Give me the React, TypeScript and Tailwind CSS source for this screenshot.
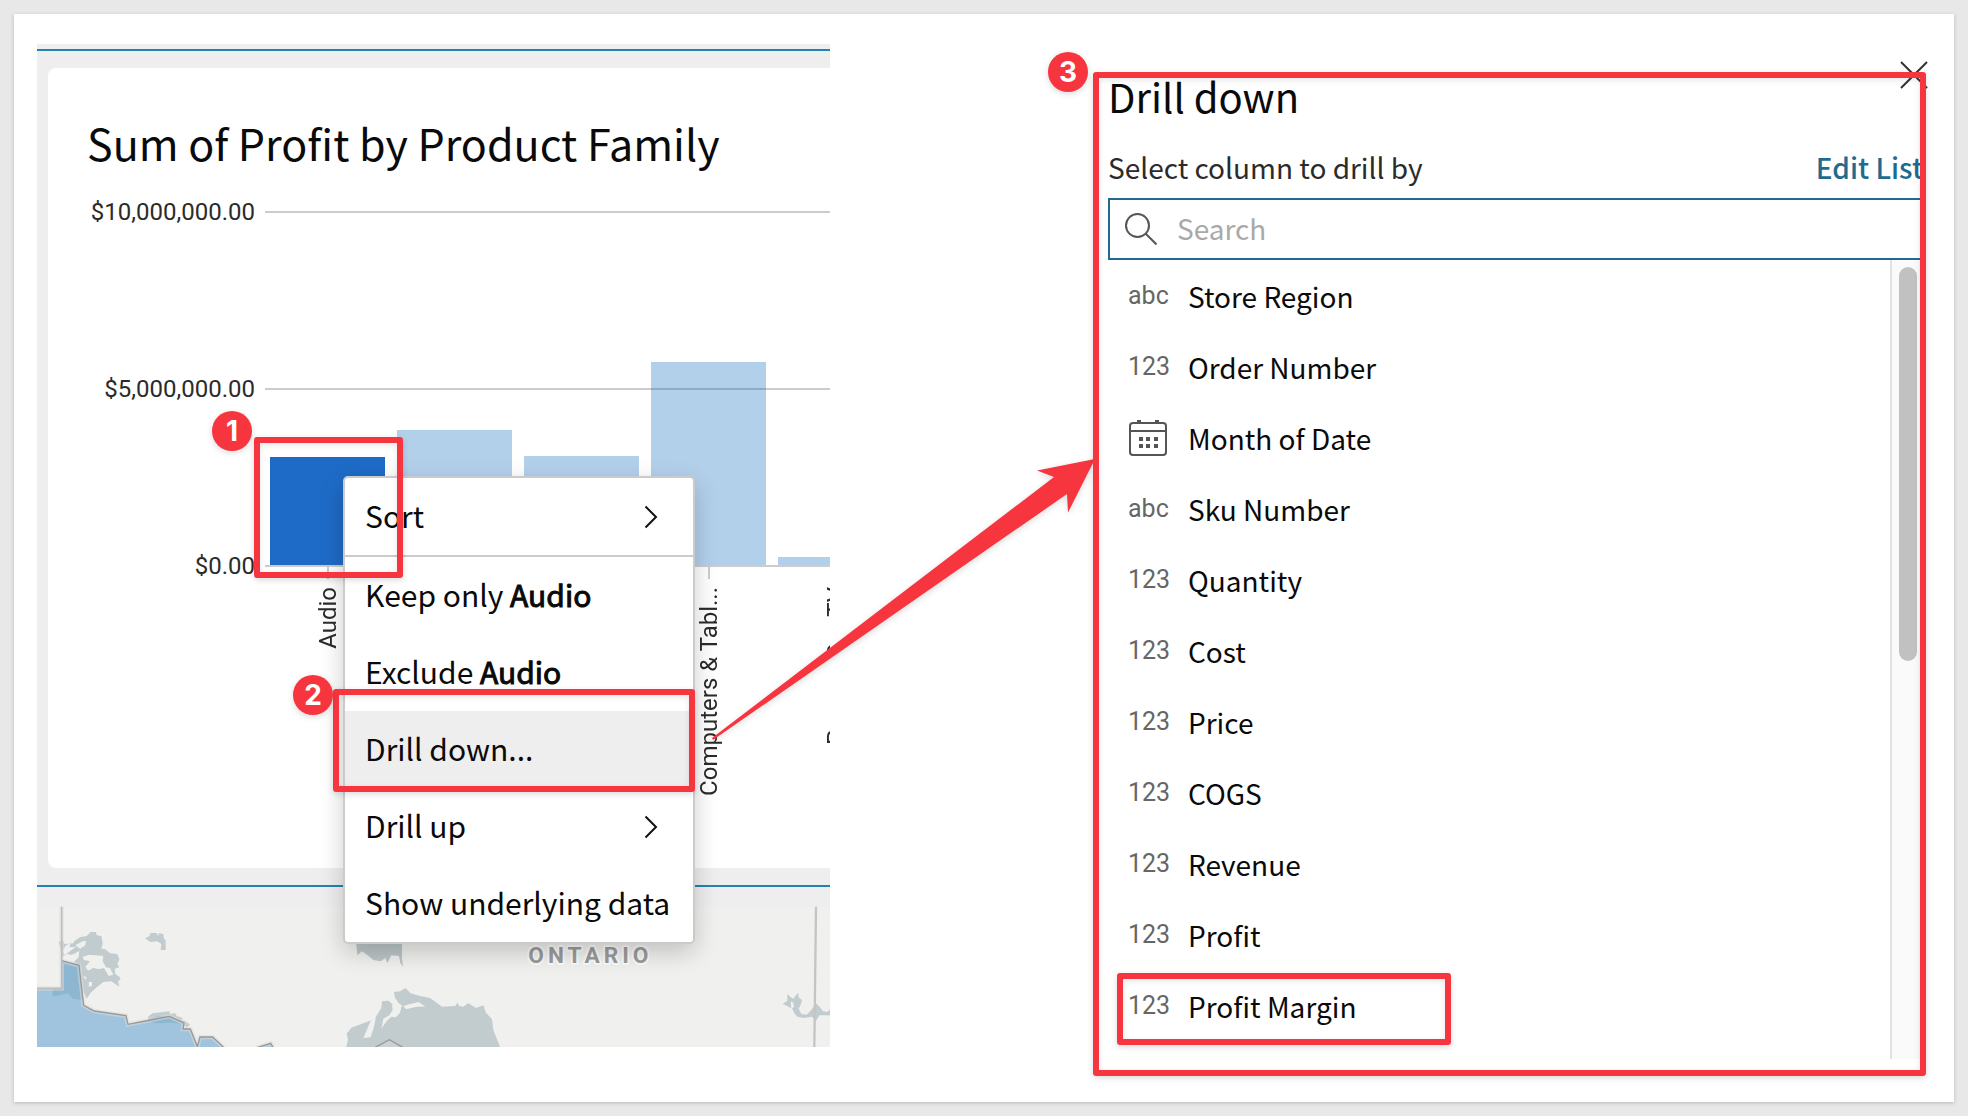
import type { ReactNode } from "react";

const SANS = "font-['Noto_Sans_CJK_SC','Noto_Sans',sans-serif]";

const AXIS_LABELS = ["$10,000,000.00", "$5,000,000.00", "$0.00"];

const BARS = [
  { label: "Audio", height: 108, active: true },
  { label: "", height: 135, active: false },
  { label: "", height: 109, active: false },
  { label: "Computers & Tabl...", height: 203, active: false },
  { label: "Powers Car TV", height: 8, active: false },
];

const COLUMNS = [
  { type: "abc", name: "Store Region" },
  { type: "123", name: "Order Number" },
  { type: "date", name: "Month of Date" },
  { type: "abc", name: "Sku Number" },
  { type: "123", name: "Quantity" },
  { type: "123", name: "Cost" },
  { type: "123", name: "Price" },
  { type: "123", name: "COGS" },
  { type: "123", name: "Revenue" },
  { type: "123", name: "Profit" },
  { type: "123", name: "Profit Margin", marked: true },
];

function Badge({ n, className }: { n: number; className: string }) {
  return (
    <span
      className={`absolute flex size-10 items-center justify-center rounded-full bg-[#f7353f] font-[Inter,sans-serif] text-[28px] leading-10 font-bold text-white shadow-[0_2px_6px_rgba(0,0,0,0.15)] ${className}`}
    >
      {n}
    </span>
  );
}

function Frame({ className }: { className: string }) {
  return (
    <span
      className={`pointer-events-none absolute rounded-[3px] border-6 border-[#f7353f] shadow-[0_2px_6px_rgba(0,0,0,0.15),inset_0_2px_6px_rgba(0,0,0,0.1)] ${className}`}
    />
  );
}

function MapStrip() {
  return (
    <svg
      viewBox="37 887 793 160"
      preserveAspectRatio="xMinYMin slice"
      className="block h-40 w-full bg-[#eeeeee]"
      aria-label="Map of Ontario"
    >
      <rect x="37" y="907" width="2000" height="140" fill="#f0f0ee" />
      <g transform="translate(30 880) scale(.33333)">
        <path
          d="M86 186L98 180L104 192L130 190L134 182L150 172L170 168L182 156H198L200 166L214 168L218 190L214 206L226 208L240 220L262 222L268 238L262 252L268 262L254 266L256 282L268 290L272 298L264 304L268 320L256 312L244 304L220 306L200 322L182 338L170 356L158 330L148 260L128 244L132 226L110 222L98 230L92 206Z"
          fill="#c2cbcd"
        />
        <path
          d="M108 196L122 190L118 202L138 200L112 220L104 226L98 212ZM136 196L158 184L168 182L166 196L150 206ZM98 236L136 220L148 212L146 232L128 250ZM158 230L178 224L220 228L218 244L228 262L240 264L250 284L236 288L222 264L206 268L190 264L174 272L166 260L180 244L162 240ZM176 306H186V318L176 320ZM160 288L170 292L166 300Z"
          fill="#f0f0ee"
        />
        <path d="M345 175L358 169L362 159H380L384 167L388 159L400 163L402 177L407 180V210H392L394 192L382 184L362 186L356 182Z" fill="#c2cbcd" />
        <path d="M354 410L368 400L418 394L420 402L436 400L440 408L458 414L454 420L464 422L480 434L470 442L420 418L390 416L356 424Z" fill="#c2cbcd" />
        <path d="M21 325H95V242L147 256L161 376L193 393L288 407L294 433L346 423L418 409L462 429L459 447H481L502 499L510 471H548L582 503H21Z" fill="#a0c4dd" />
        <path d="M680 503L722 490L730 503Z" fill="#a0c4dd" />
        <path d="M95 244L147 258L160 360L128 356L114 340L68 350V326H95Z" fill="#8db6d0" />
        <path d="M344 423L384 408L418 409L462 432L422 428L382 430Z" fill="#8db6d0" />
        <path d="M95 80V325H21M95 242L147 256L161 376L193 393L288 407L294 433L346 423L418 409L462 429L459 447H481L502 499L510 471H548L582 503M680 503L722 490L730 503" fill="none" stroke="#dddddb" strokeWidth="14" strokeOpacity=".5" />
        <path d="M95 242L147 256L161 376L193 393L288 407L294 433L346 423L418 409L462 429L459 447H481L502 499L510 471H548L582 503M680 503L722 490L730 503" fill="none" stroke="#989898" strokeWidth="4" />
        <path d="M95 80V325H21" fill="none" stroke="#bdbdbd" strokeWidth="5" />
      </g>
      <g transform="translate(320 910) scale(.33333)">
        <path d="M108 90H246V144L249 170L241 160L237 138L214 136L202 160L196 144L182 154L160 150L146 138L126 124L112 136Z" fill="#bcc5c7" />
        <path
          d="M78 413L84 389L80 371L94 353L150 332L164 326L184 294L186 274L206 272L220 286L240 284L225 264L222 246L240 244L256 234L272 250L300 258L330 264L350 278L366 290L406 288L412 278L418 288L430 290L445 280L462 290L468 294L490 286L498 308L516 328L520 360L541 413Z"
          fill="#c2cbcd"
        />
        <path
          d="M130 384L152 332L168 320L162 350L152 382ZM184 356L190 326L208 316L218 300L216 286L232 278L246 286L240 308L228 322L214 320L200 334ZM250 288L262 284L296 276L316 290H290L258 298Z"
          fill="#f0f0ee"
        />
        <path d="M164 413L208 389L250 413Z" fill="#ccd1d2" stroke="#989898" strokeWidth="4" />
        <text
          x="625"
          y="160"
          fill="#9b9b9b"
          stroke="#fbfbfb"
          strokeWidth="12"
          strokeLinejoin="round"
          paintOrder="stroke"
          className="font-[Roboto,sans-serif] text-[68px] font-bold tracking-[12px]"
        >
          ONTARIO
        </text>
      </g>
      <g transform="translate(740 860) scale(.33333)">
        <path d="M128 432L142 422V402L152 412L160 416L174 398L176 412L186 420L182 434L176 446L184 462L200 464L214 450L228 430L242 444L248 454L262 456L268 450H272V466H238L228 482L216 470L192 474L172 470L162 458L156 444L148 442L142 438Z" fill="#c2cbcd" />
        <path d="M152 424L160 428L162 440L154 446Z" fill="#f0f0ee" />
        <path d="M228 140L223 562" stroke="#c4c4c4" strokeWidth="7" fill="none" />
      </g>
    </svg>
  );
}

function MenuItem({ children, submenu, active }: { children: ReactNode; submenu?: boolean; active?: boolean }) {
  return (
    <button
      type="button"
      role="menuitem"
      className={`flex h-[77px] w-full items-center justify-between pr-[35px] pl-5 text-left text-[30px] leading-[44px] whitespace-nowrap ${active ? "bg-[#eeeeee]" : ""}`}
    >
      <span className="pb-1">{children}</span>
      {submenu && (
        <svg viewBox="0 0 14 24" className="h-6 w-3.5 shrink-0" fill="none" stroke="#111" strokeWidth="2" aria-hidden="true">
          <path d="M1.500 1.500L12 12L1.500 22.500" />
        </svg>
      )}
    </button>
  );
}

function Emphasis({ children }: { children: ReactNode }) {
  return <b className="font-normal [-webkit-text-stroke:1px_#0a0a0a]">{children}</b>;
}

function ContextMenu() {
  return (
    <div
      role="menu"
      className="absolute top-[432px] left-[306px] w-[352px] rounded-[5px] border-2 border-[#cbcbcb] bg-white text-[#0a0a0a] shadow-[0_8px_24px_rgba(0,0,0,0.2)]"
    >
      <MenuItem submenu>Sort</MenuItem>
      <hr className="h-[2px] border-0 bg-[#cbcbcb]" />
      <MenuItem>
        Keep only <Emphasis>Audio</Emphasis>
      </MenuItem>
      <MenuItem>
        Exclude <Emphasis>Audio</Emphasis>
      </MenuItem>
      <div className="relative">
        <MenuItem active>Drill down...</MenuItem>
        <Frame className="-top-[22px] -right-[2px] -bottom-1 -left-3" />
        <Badge n={2} className="-top-9 -left-[52px]" />
      </div>
      <MenuItem submenu>Drill up</MenuItem>
      <MenuItem>Show underlying data</MenuItem>
    </div>
  );
}

function Chart() {
  return (
    <div className="mt-[30px] flex gap-2.5">
      <div className="flex h-[378px] w-[168px] shrink-0 flex-col justify-between text-right font-[Roboto,sans-serif] text-2xl leading-6 text-[#2b2b2b]">
        {AXIS_LABELS.map((label) => (
          <span key={label}>{label}</span>
        ))}
      </div>
      <div className="min-w-0 flex-1 overflow-hidden pt-[11px]">
        <div className="grid">
          <div className="col-start-1 row-start-1 flex h-[356px] flex-col justify-between">
            {AXIS_LABELS.map((label) => (
              <span key={label} className="h-[2px] bg-[#cccccc]" />
            ))}
          </div>
          <div className="z-0 col-start-1 row-start-1 flex h-[354px] items-end gap-3 pl-[5px]">
            {BARS.map((bar, i) => (
              <span
                key={i}
                className={`w-[115px] shrink-0 ${bar.active ? "bg-[#1e6bc7]" : "bg-[#0262bd]/30"}`}
                style={{ height: bar.height }}
              />
            ))}
          </div>
        </div>
        <div className="flex h-60 gap-3 overflow-hidden pl-[5px] font-[Roboto,sans-serif] text-2xl text-[#2b2b2b]">
          {BARS.map((bar, i) => (
            <div key={i} className="flex w-[115px] shrink-0 flex-col items-center gap-2">
              <span className="h-3 w-[2px] bg-[#cccccc]" />
              <span className="rotate-180 leading-7 whitespace-nowrap [writing-mode:vertical-rl]">{bar.label}</span>
            </div>
          ))}
        </div>
      </div>
    </div>
  );
}

function Dashboard() {
  return (
    <section className="relative min-w-0 bg-[#eeeeee] pt-[5px]">
      <div className="h-[2px] bg-[#2583b4]" />
      <div className="py-[17px] pl-[11px]">
        <div className="h-[800px] rounded-l-lg bg-white pt-[46px] pl-[39px]">
          <h1 className="text-[43px] leading-[56px] whitespace-nowrap text-[#0a0a0a]">Sum of Profit by Product Family</h1>
          <Chart />
        </div>
      </div>
      <div className="h-[2px] bg-[#2583b4]" />
      <MapStrip />
      <ContextMenu />
      <Frame className="top-[393px] left-[217px] h-[141px] w-[149px]" />
      <Badge n={1} className="top-[367px] left-[175px]" />
    </section>
  );
}

function CalendarIcon() {
  return (
    <svg viewBox="0 0 40 38" className="h-[38px] w-10 shrink-0" fill="none" stroke="#555" strokeWidth="2" aria-hidden="true">
      <rect x="2" y="4" width="36" height="32" rx="3" />
      <path d="M2 12H38" />
      <path d="M9 3h4M27 3h4M11 20h4M18 20h4M26 20h4M11 27h4M18 27h4M26 27h4" strokeWidth="4" />
    </svg>
  );
}

function DrillPanel() {
  return (
    <section className="relative mt-7 min-w-0 pr-1.5 pb-[17px] pl-[15px]">
      <h2 className="pt-[2px] text-[40px] leading-[44px] text-[#0a0a0a]">Drill down</h2>
      <button type="button" aria-label="Close" className="absolute -top-[11px] -right-[2px]">
        <svg viewBox="0 0 28 28" className="size-7" fill="none" stroke="#333" strokeWidth="2" aria-hidden="true">
          <path d="M1 1L27 27M27 1L1 27" />
        </svg>
      </button>
      <div className="mt-[29px] flex items-center justify-between leading-10">
        <label htmlFor="column-search" className="text-[28px] text-[#2b2b2b]">
          Select column to drill by
        </label>
        <a href="#edit" className="-mr-[3px] text-[28px] font-medium text-[#1f6b8f]">
          Edit List
        </a>
      </div>
      <div className="mt-[11px] flex h-[62px] items-center gap-5 border-2 border-r-0 border-[#1f6b8f] pl-[15px]">
        <svg viewBox="0 0 32 32" className="size-8 shrink-0" fill="none" stroke="#555" strokeWidth="2" aria-hidden="true">
          <circle cx="12.500" cy="12.500" r="11.500" />
          <path d="M20.500 20.500L31.500 31.500" />
        </svg>
        <input
          id="column-search"
          type="text"
          placeholder="Search"
          className="min-w-0 flex-1 bg-transparent pb-[2px] text-[28px] leading-10 outline-none placeholder:text-[#a9a9a9]"
        />
      </div>
      <div className="flex">
        <ul className="min-w-0 flex-1 pb-[18px] pl-5">
          {COLUMNS.map((col) => (
            <li key={col.name} className="relative">
              <button type="button" className="flex h-[71px] w-full items-center gap-5 text-left">
                {col.type === "date" ? (
                  <CalendarIcon />
                ) : (
                  <span className="w-10 shrink-0 font-[Roboto,sans-serif] text-[25px] leading-10 text-[#666666]">{col.type}</span>
                )}
                <span className="text-[28px] leading-10 text-[#0a0a0a]">{col.name}</span>
              </button>
              {col.marked && <Frame className="top-[3px] -left-[11px] h-[72px] w-[334px]" />}
            </li>
          ))}
        </ul>
        <div className="w-[30px] shrink-0 border-l-2 border-[#e2e2e2] bg-[#fafafa] px-[7px] pt-[7px]">
          <div className="h-[394px] w-[18px] rounded-full bg-[#c1c1c1]" />
        </div>
      </div>
      <svg
        viewBox="0 0 384 284"
        className="pointer-events-none absolute top-[387px] right-full -mr-[3px] h-[284px] w-96 drop-shadow-[0_2px_3px_rgba(0,0,0,0.15)]"
        fill="#f7353f"
        aria-hidden="true"
      >
        <path d="M383 0L325 11.500L342 18L0 279L1 281L355 35L356 53.500Z" />
      </svg>
      <Frame className="inset-0" />
      <Badge n={3} className="-top-5 -left-[45px]" />
    </section>
  );
}

export default function App() {
  return (
    <div className={`flex min-h-screen bg-[#e8e8e8] p-3.5 ${SANS}`}>
      <main className="grid flex-1 grid-cols-[793fr_833fr] items-start gap-[263px] bg-white pt-[30px] pr-7 pb-[26px] pl-[23px] shadow-[0_1px_4px_rgba(0,0,0,0.2)]">
        <Dashboard />
        <DrillPanel />
      </main>
    </div>
  );
}
